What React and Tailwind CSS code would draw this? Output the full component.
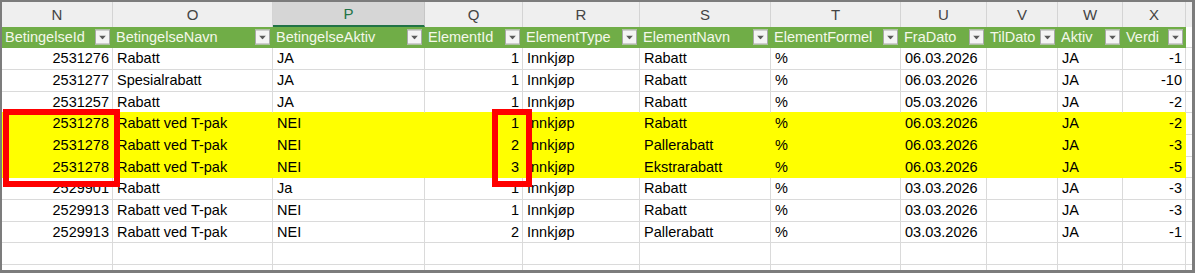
import React from "react";

const COLS = [
  { letter: "N", name: "BetingelseId", w: "w-[111px]", right: true },
  { letter: "O", name: "BetingelseNavn", w: "w-[160px]" },
  { letter: "P", name: "BetingelseAktiv", w: "w-[152px]", selected: true },
  { letter: "Q", name: "ElementId", w: "w-[98px]", right: true },
  { letter: "R", name: "ElementType", w: "w-[117px]" },
  { letter: "S", name: "ElementNavn", w: "w-[131px]" },
  { letter: "T", name: "ElementFormel", w: "w-[130px]" },
  { letter: "U", name: "FraDato", w: "w-[86px]" },
  { letter: "V", name: "TilDato", w: "w-[71px]" },
  { letter: "W", name: "Aktiv", w: "w-[65px]" },
  { letter: "X", name: "Verdi", w: "w-[63px]", right: true },
];

const ROWS = [
  { v: ["2531276", "Rabatt", "JA", "1", "Innkjøp", "Rabatt", "%", "06.03.2026", "", "JA", "-1"] },
  { v: ["2531277", "Spesialrabatt", "JA", "1", "Innkjøp", "Rabatt", "%", "06.03.2026", "", "JA", "-10"] },
  { v: ["2531257", "Rabatt", "JA", "1", "Innkjøp", "Rabatt", "%", "05.03.2026", "", "JA", "-2"] },
  { v: ["2531278", "Rabatt ved T-pak", "NEI", "1", "Innkjøp", "Rabatt", "%", "06.03.2026", "", "JA", "-2"], hl: true },
  { v: ["2531278", "Rabatt ved T-pak", "NEI", "2", "Innkjøp", "Pallerabatt", "%", "06.03.2026", "", "JA", "-3"], hl: true },
  { v: ["2531278", "Rabatt ved T-pak", "NEI", "3", "Innkjøp", "Ekstrarabatt", "%", "06.03.2026", "", "JA", "-5"], hl: true },
  { v: ["2529901", "Rabatt", "Ja", "1", "Innkjøp", "Rabatt", "%", "03.03.2026", "", "JA", "-3"] },
  { v: ["2529913", "Rabatt ved T-pak", "NEI", "1", "Innkjøp", "Rabatt", "%", "03.03.2026", "", "JA", "-3"] },
  { v: ["2529913", "Rabatt ved T-pak", "NEI", "2", "Innkjøp", "Pallerabatt", "%", "03.03.2026", "", "JA", "-1"] },
  { v: ["", "", "", "", "", "", "", "", "", "", ""] },
  { v: ["", "", "", "", "", "", "", "", "", "", ""] },
];

function FilterButton() {
  return (
    <div className="absolute right-[3px] top-1/2 -translate-y-1/2 w-[15px] h-[15px] bg-[#f4f4f4] border border-[#a9a9a9] flex items-center justify-center">
      <svg width="7" height="4" viewBox="0 0 7 4">
        <path d="M0 0 H7 L3.5 4 Z" fill="#5a5a5a" />
      </svg>
    </div>
  );
}

export default function App() {
  return (
    <div
      className="w-[1195px] h-[273px] overflow-hidden bg-white border-t-2 border-l-2 border-r-[3px] border-b-[3px] border-[#7c7c7c] text-[14.5px] leading-none text-black"
      style={{ fontFamily: '"Liberation Sans", Arial, sans-serif' }}
    >
      <div className="relative">
        {/* column letters */}
        <div className="flex h-[24.67px]">
          {COLS.map((c) =>
            c.selected ? (
              <div
                key={c.letter}
                className={`${c.w} shrink-0 flex items-center justify-center bg-[#d6d6d6] text-[#217346] border-r border-[#c6c6c6] border-b-2 border-b-[#217346] text-[15px]`}
              >
                {c.letter}
              </div>
            ) : (
              <div
                key={c.letter}
                className={`${c.w} shrink-0 flex items-center justify-center bg-[#efefef] text-[#444] border-r border-[#d4d4d4] text-[15px]`}
              >
                {c.letter}
              </div>
            )
          )}
          <div className="flex-1 bg-[#efefef]" />
        </div>

        {/* table header */}
        <div className="flex h-[21.67px]">
          {COLS.map((c) => (
            <div
              key={c.name}
              className={`${c.w} shrink-0 relative flex items-center pl-[3px] bg-[#70ad47] text-[#f4f8ea]`}
            >
              {c.name}
              <FilterButton />
            </div>
          ))}
          <div className="flex-1 border-b border-[#dadada]" />
        </div>

        {/* data rows */}
        {ROWS.map((r, i) => {
          const nextHl = ROWS[i + 1] && ROWS[i + 1].hl;
          return (
            <div key={i} className="flex h-[21.67px]">
              {COLS.map((c, j) => (
                <div
                  key={j}
                  className={`${c.w} shrink-0 flex items-center border-r border-b ${
                    r.hl
                      ? "bg-[#ffff00] border-[#ffff00]"
                      : nextHl
                      ? "border-r-[#dadada] border-b-[#ffff00]"
                      : "border-[#dadada]"
                  } ${c.right ? "justify-end pr-[3px]" : "pl-[4px]"}`}
                >
                  {r.v[j]}
                </div>
              ))}
              <div className="flex-1 border-b border-[#dadada]" />
            </div>
          );
        })}

        {/* highlight frames */}
        <div className="absolute left-[1px] top-[107px] w-[117px] h-[78px] border-[6px] border-[#ff0000]" />
        <div className="absolute left-[490px] top-[107px] w-[40px] h-[78px] border-[6px] border-[#ff0000]" />
      </div>
    </div>
  );
}
